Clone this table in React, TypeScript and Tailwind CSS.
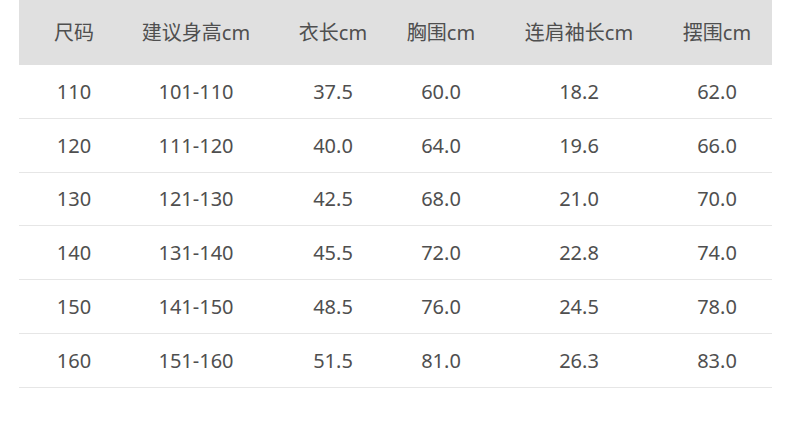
const headers = ["尺码", "建议身高cm", "衣长cm", "胸围cm", "连肩袖长cm", "摆围cm"];

const rows = [
  ["110", "101-110", "37.5", "60.0", "18.2", "62.0"],
  ["120", "111-120", "40.0", "64.0", "19.6", "66.0"],
  ["130", "121-130", "42.5", "68.0", "21.0", "70.0"],
  ["140", "131-140", "45.5", "72.0", "22.8", "74.0"],
  ["150", "141-150", "48.5", "76.0", "24.5", "78.0"],
  ["160", "151-160", "51.5", "81.0", "26.3", "83.0"],
];

const cols = "grid grid-cols-[110px_134px_140px_76px_200px_93px]";

const Cell = ({ text, last }: { text: string; last: boolean }) => {
  return (
    <div className={`flex items-center justify-center whitespace-nowrap ${last ? "pr-[17px]" : ""}`}>
      {text}
    </div>
  );
};

export default function App() {
  return (
    <div
      className="w-[790px] h-[431px] bg-white pl-[19px] text-[20px] text-[#4f4f4f]"
      style={{ fontFamily: '"Noto Sans", "Noto Sans CJK SC", sans-serif' }}
    >
      <div className="w-[753px]">
        <div className={`${cols} h-[65px] bg-[#e0e0e0]`}>
          {headers.map((h, i) => (
            <Cell key={h} text={h} last={i === 5} />
          ))}
        </div>
        {rows.map((r) => (
          <div key={r[0]} className={`${cols} h-[53.8px] pt-px border-b border-[#e6e6e6]`}>
            {r.map((c, i) => (
              <Cell key={i} text={c} last={i === 5} />
            ))}
          </div>
        ))}
      </div>
    </div>
  );
}
